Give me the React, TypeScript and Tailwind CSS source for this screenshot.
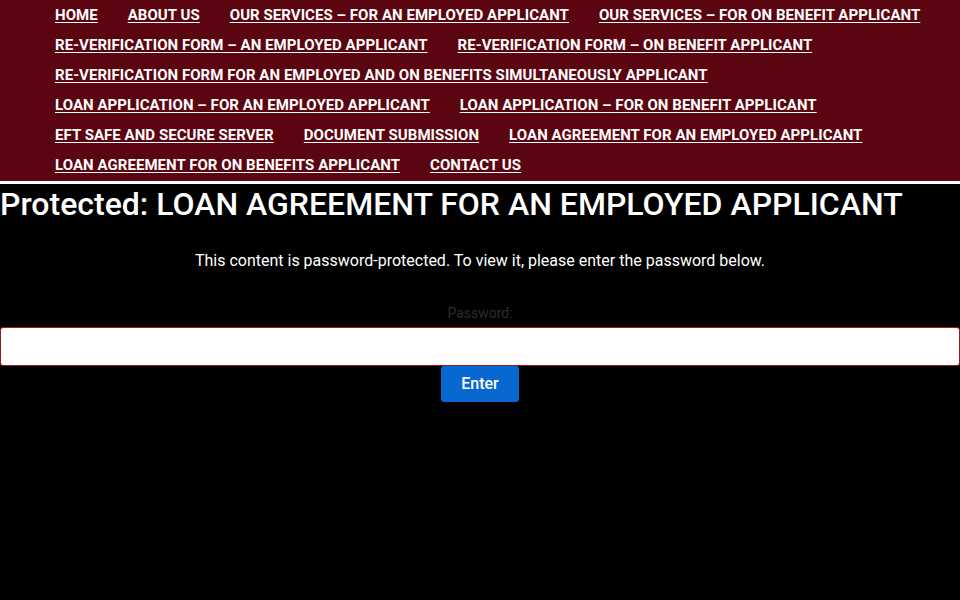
import React from 'react';

const navItems = [
  'HOME',
  'ABOUT US',
  'OUR SERVICES – FOR AN EMPLOYED APPLICANT',
  'OUR SERVICES – FOR ON BENEFIT APPLICANT',
  'RE-VERIFICATION FORM – AN EMPLOYED APPLICANT',
  'RE-VERIFICATION FORM – ON BENEFIT APPLICANT',
  'RE-VERIFICATION FORM FOR AN EMPLOYED AND ON BENEFITS SIMULTANEOUSLY APPLICANT',
  'LOAN APPLICATION – FOR AN EMPLOYED APPLICANT',
  'LOAN APPLICATION – FOR ON BENEFIT APPLICANT',
  'EFT SAFE AND SECURE SERVER',
  'DOCUMENT SUBMISSION',
  'LOAN AGREEMENT FOR AN EMPLOYED APPLICANT',
  'LOAN AGREEMENT FOR ON BENEFITS APPLICANT',
  'CONTACT US',
];

const App: React.FC = () => {
  return (
    <div className="min-h-[600px] bg-black font-['Roboto',sans-serif] text-white">
      <header className="bg-[#5a0510] pl-[55px] pr-[10px] pb-[1px]">
        <ul className="flex flex-wrap gap-x-[30px]">
          {navItems.map((item) => (
            <li key={item} className="leading-[30px]">
              <a href="#" className="text-[15px] font-bold tracking-[0.05px] text-white underline underline-offset-2">
                {item}
              </a>
            </li>
          ))}
        </ul>
      </header>
      <div className="h-[3px] bg-white" />

      <main>
        <h1 className="text-[32px] font-medium leading-[40px]">
          Protected: LOAN AGREEMENT FOR AN EMPLOYED APPLICANT
        </h1>
        <form className="flex flex-col items-center">
          <p className="text-[16px] leading-[24px] mt-[25px]">
            This content is password-protected. To view it, please enter the password below.
          </p>
          <label htmlFor="pwbox" className="mt-[30px] text-[14px] leading-[20px] text-[#2a2d33]">
            Password:
          </label>
          <input
            id="pwbox"
            type="password"
            className="mt-[4px] h-[39px] w-full rounded-[3px] border border-[#9b1c1c] bg-white px-3 text-black outline-none"
          />
          <button
            type="button"
            className="h-[36px] w-[78px] rounded-[3px] bg-[#0968d0] text-[16px] font-medium text-white"
          >
            Enter
          </button>
        </form>
      </main>
    </div>
  );
};

export default App;
